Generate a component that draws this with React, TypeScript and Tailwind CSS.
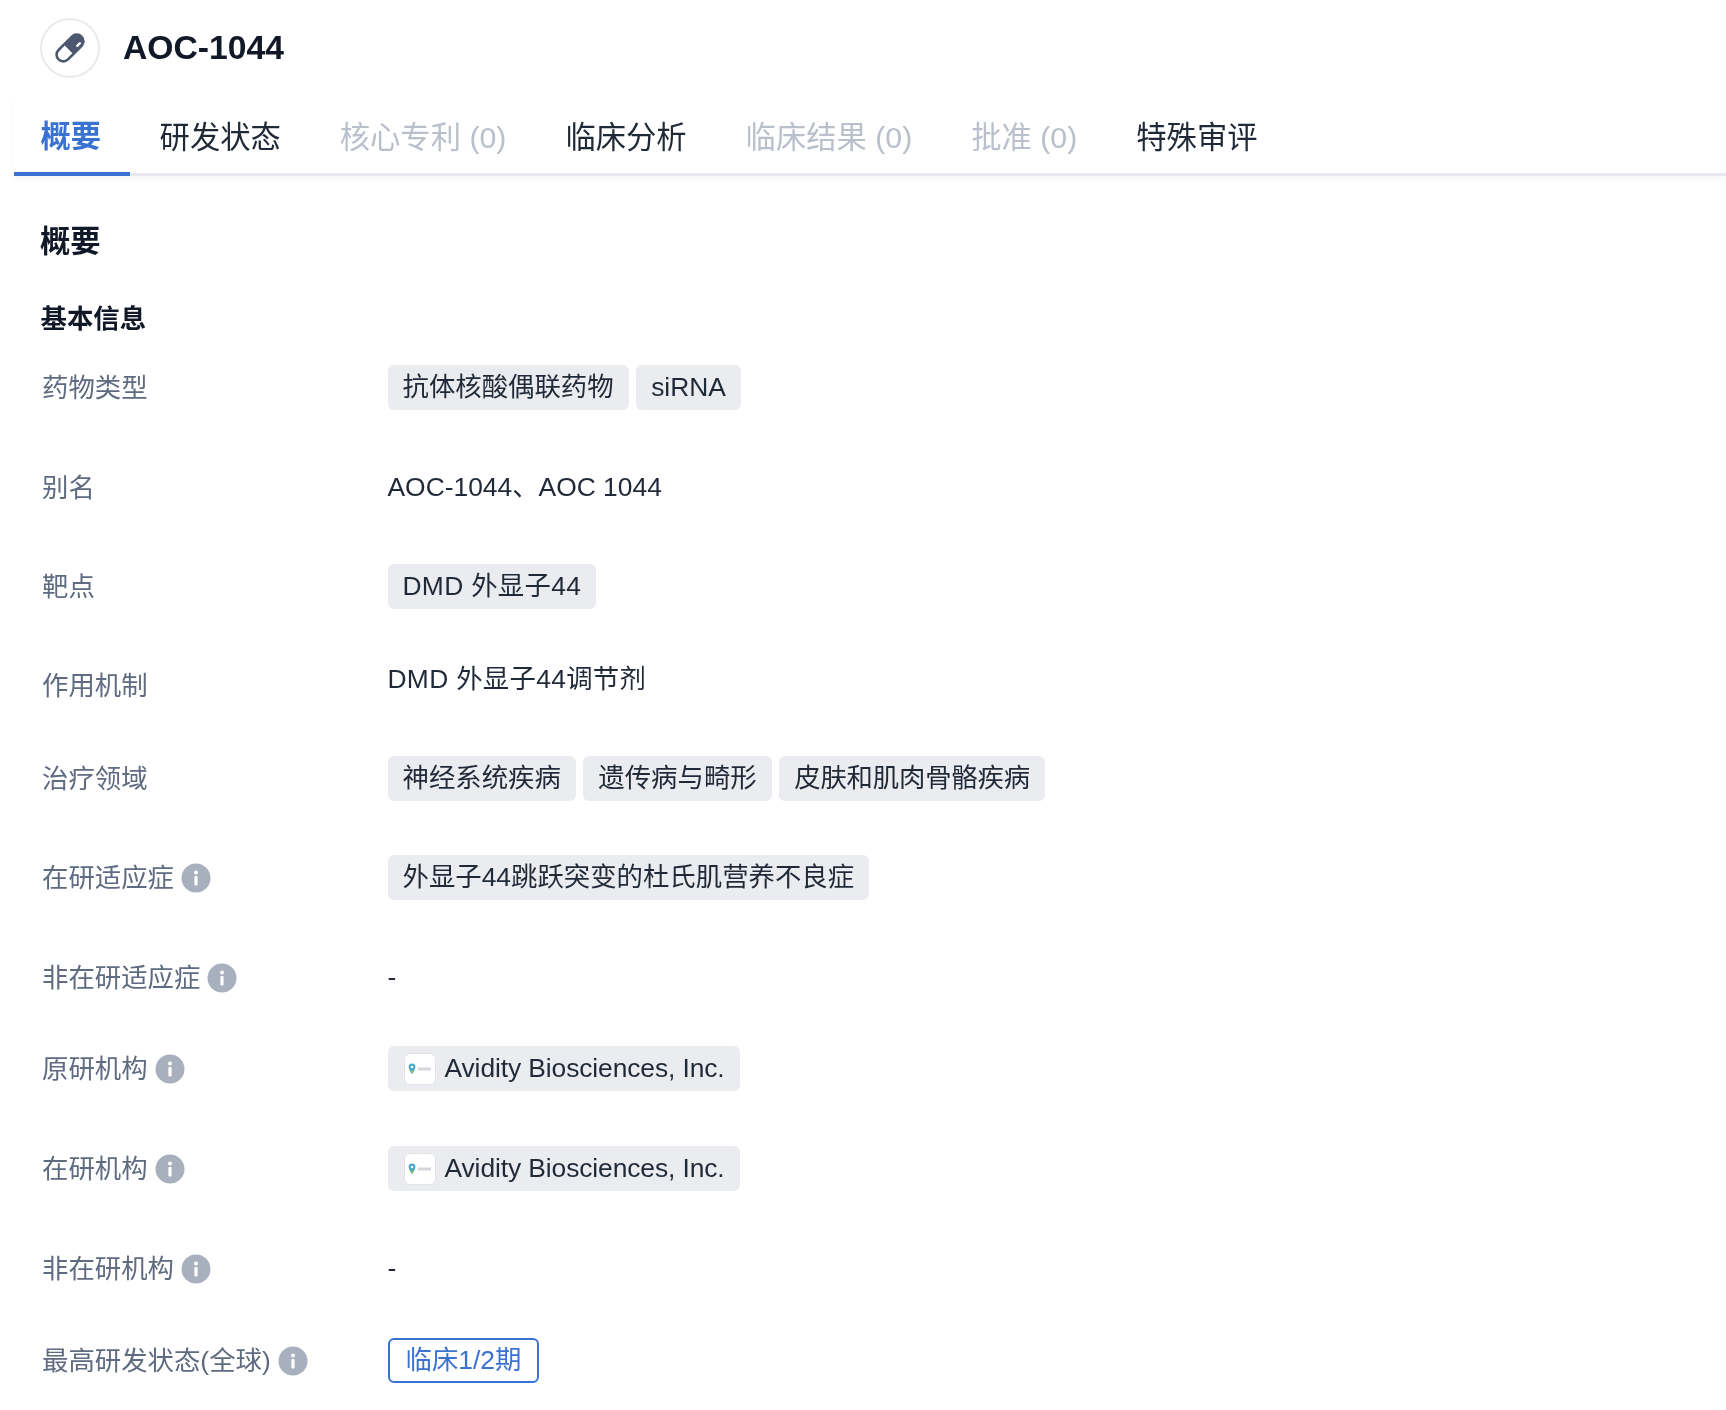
import React from "react";

const tabs = [
  { label: "概要", active: true },
  { label: "研发状态" },
  { label: "核心专利 (0)", disabled: true },
  { label: "临床分析" },
  { label: "临床结果 (0)", disabled: true },
  { label: "批准 (0)", disabled: true },
  { label: "特殊审评" },
];

const InfoIcon = () => (
  <svg width="30" height="30" viewBox="0 0 30 30" className="-mt-[3px] ml-[7px] shrink-0">
    <circle cx="15" cy="15" r="14.5" fill="#a9b0bd" />
    <circle cx="15" cy="9.5" r="2" fill="#fff" />
    <rect x="13.4" y="13" width="3.2" height="9.5" rx="1" fill="#fff" />
  </svg>
);

const PillIcon = () => (
  <svg width="30" height="30" viewBox="0 0 30 30">
    <g transform="rotate(45 15 15)">
      <rect x="7" y="-2.5" width="16" height="35" rx="8" fill="#4b5870" />
      <path d="M9.6 17h10.8v7.5a5.4 5.4 0 0 1-10.8 0z" fill="#fff" />
      <rect x="17.4" y="3.5" width="2.4" height="6" rx="1.2" fill="#fff" />
    </g>
  </svg>
);

const Tag = ({ children }: { children: React.ReactNode }) => (
  <span className="flex h-[45px] items-center rounded-md bg-[#ebecf0] px-[15px] text-[#1f2937]">
    {children}
  </span>
);

const OrgTag = () => (
  <Tag>
    <span className="ml-[1px] mr-[9px] flex h-[32px] w-[32px] items-center justify-center rounded-md border border-[#e2e4e9] bg-white">
      <svg width="26" height="14" viewBox="0 0 26 14">
        <path d="M5 1.5a3.4 3.4 0 0 1 3.4 3.4C8.4 7.5 5 12 5 12S1.6 7.5 1.6 4.9A3.4 3.4 0 0 1 5 1.5z" fill="#4aa9c9" />
        <path d="M3 7.5C4 9.5 5 12 5 12l1.5-2.5z" fill="#8cc152" />
        <circle cx="5" cy="5" r="1.3" fill="#fff" />
        <rect x="11" y="5.5" width="13" height="3" fill="#d4d7dc" />
      </svg>
    </span>
    <span className="tracking-[-0.1px]">Avidity Biosciences, Inc.</span>
  </Tag>
);

const rows = [
  {
    label: "药物类型",
    height: "h-[100px]",
    value: (
      <>
        <Tag>抗体核酸偶联药物</Tag>
        <Tag>siRNA</Tag>
      </>
    ),
  },
  { label: "别名", height: "h-[99px]", value: "AOC-1044、AOC 1044" },
  { label: "靶点", height: "h-[99px]", value: <Tag><span className="tracking-[0.3px]">DMD 外显子44</span></Tag> },
  {
    label: "作用机制",
    height: "h-[93px]",
    value: <span className="-mt-[11px] tracking-[0.3px]">DMD 外显子44调节剂</span>,
  },
  {
    label: "治疗领域",
    height: "h-[99px]",
    value: (
      <>
        <Tag>神经系统疾病</Tag>
        <Tag>遗传病与畸形</Tag>
        <Tag><span className="tracking-[-0.2px]">皮肤和肌肉骨骼疾病</span></Tag>
      </>
    ),
  },
  {
    label: "在研适应症",
    info: true,
    height: "h-[100px]",
    value: <Tag>外显子44跳跃突变的杜氏肌营养不良症</Tag>,
  },
  { label: "非在研适应症", info: true, height: "h-[91px]", value: "-" },
  { label: "原研机构", info: true, height: "h-[100px]", value: <OrgTag /> },
  { label: "在研机构", info: true, height: "h-[100px]", value: <OrgTag /> },
  { label: "非在研机构", info: true, height: "h-[92px]", value: "-" },
  {
    label: "最高研发状态(全球)",
    info: true,
    height: "h-[45px]",
    value: (
      <span className="flex h-[45px] items-center rounded-md border-2 border-[#3a72d2] bg-white px-4 text-[#3a72d2]">
        临床1/2期
      </span>
    ),
  },
];

export default function App() {
  return (
    <div className="h-[1410px] w-full overflow-hidden bg-white pt-[18px] font-['Liberation_Sans','Noto_Sans_CJK_SC',sans-serif] blur-[0.5px]">
      {/* drug title */}
      <div className="flex items-center pl-10">
        <div className="flex h-[60px] w-[60px] items-center justify-center rounded-full border-2 border-[#e8eaee]">
          <PillIcon />
        </div>
        <h1 className="-mt-[2px] ml-[23px] text-[33.7px] font-bold text-[#111827]">AOC-1044</h1>
      </div>

      {/* tabs */}
      <div className="relative ml-[14px] mt-[18px] flex h-[80px] border-b-[3px] border-[#e7e9ee] shadow-[0_4px_6px_rgba(0,0,0,0.03)]">
        {tabs.map((tab) => (
          <div
            key={tab.label}
            className={`flex items-center pt-[6px] text-[30.3px] ${
              tab.active
                ? "-mb-[3px] border-b-4 border-[#3a72d2] pl-[26.5px] pr-[29px] font-bold text-[#3a72d2]"
                : tab.disabled
                  ? "px-[29.5px] text-[#b9c0cc]"
                  : "px-[29.5px] text-[#1f2937]"
            }`}
          >
            {tab.label}
          </div>
        ))}
      </div>

      {/* overview */}
      <div className="pl-[41px]">
        <h2 className="-ml-[1px] mt-[46px] flex h-[40px] items-center text-[30.3px] font-bold text-[#111827]">概要</h2>
        <h3 className="-ml-[0.5px] mt-[40px] flex h-[36px] items-center text-[26.4px] font-bold text-[#111827]">基本信息</h3>
        <div className="mt-[27px] text-[26.4px]">
          {rows.map((row) => (
            <div key={row.label} className={`flex items-start ${row.height}`}>
              <div className="flex h-[45px] w-[346.5px] items-center pl-[1px] pt-[3px] text-[#5f6b80]">
                {row.label}
                {row.info && <InfoIcon />}
              </div>
              <div className="flex h-[45px] items-center gap-[7.5px] text-[#1f2937]">{row.value}</div>
            </div>
          ))}
        </div>
      </div>
    </div>
  );
}
